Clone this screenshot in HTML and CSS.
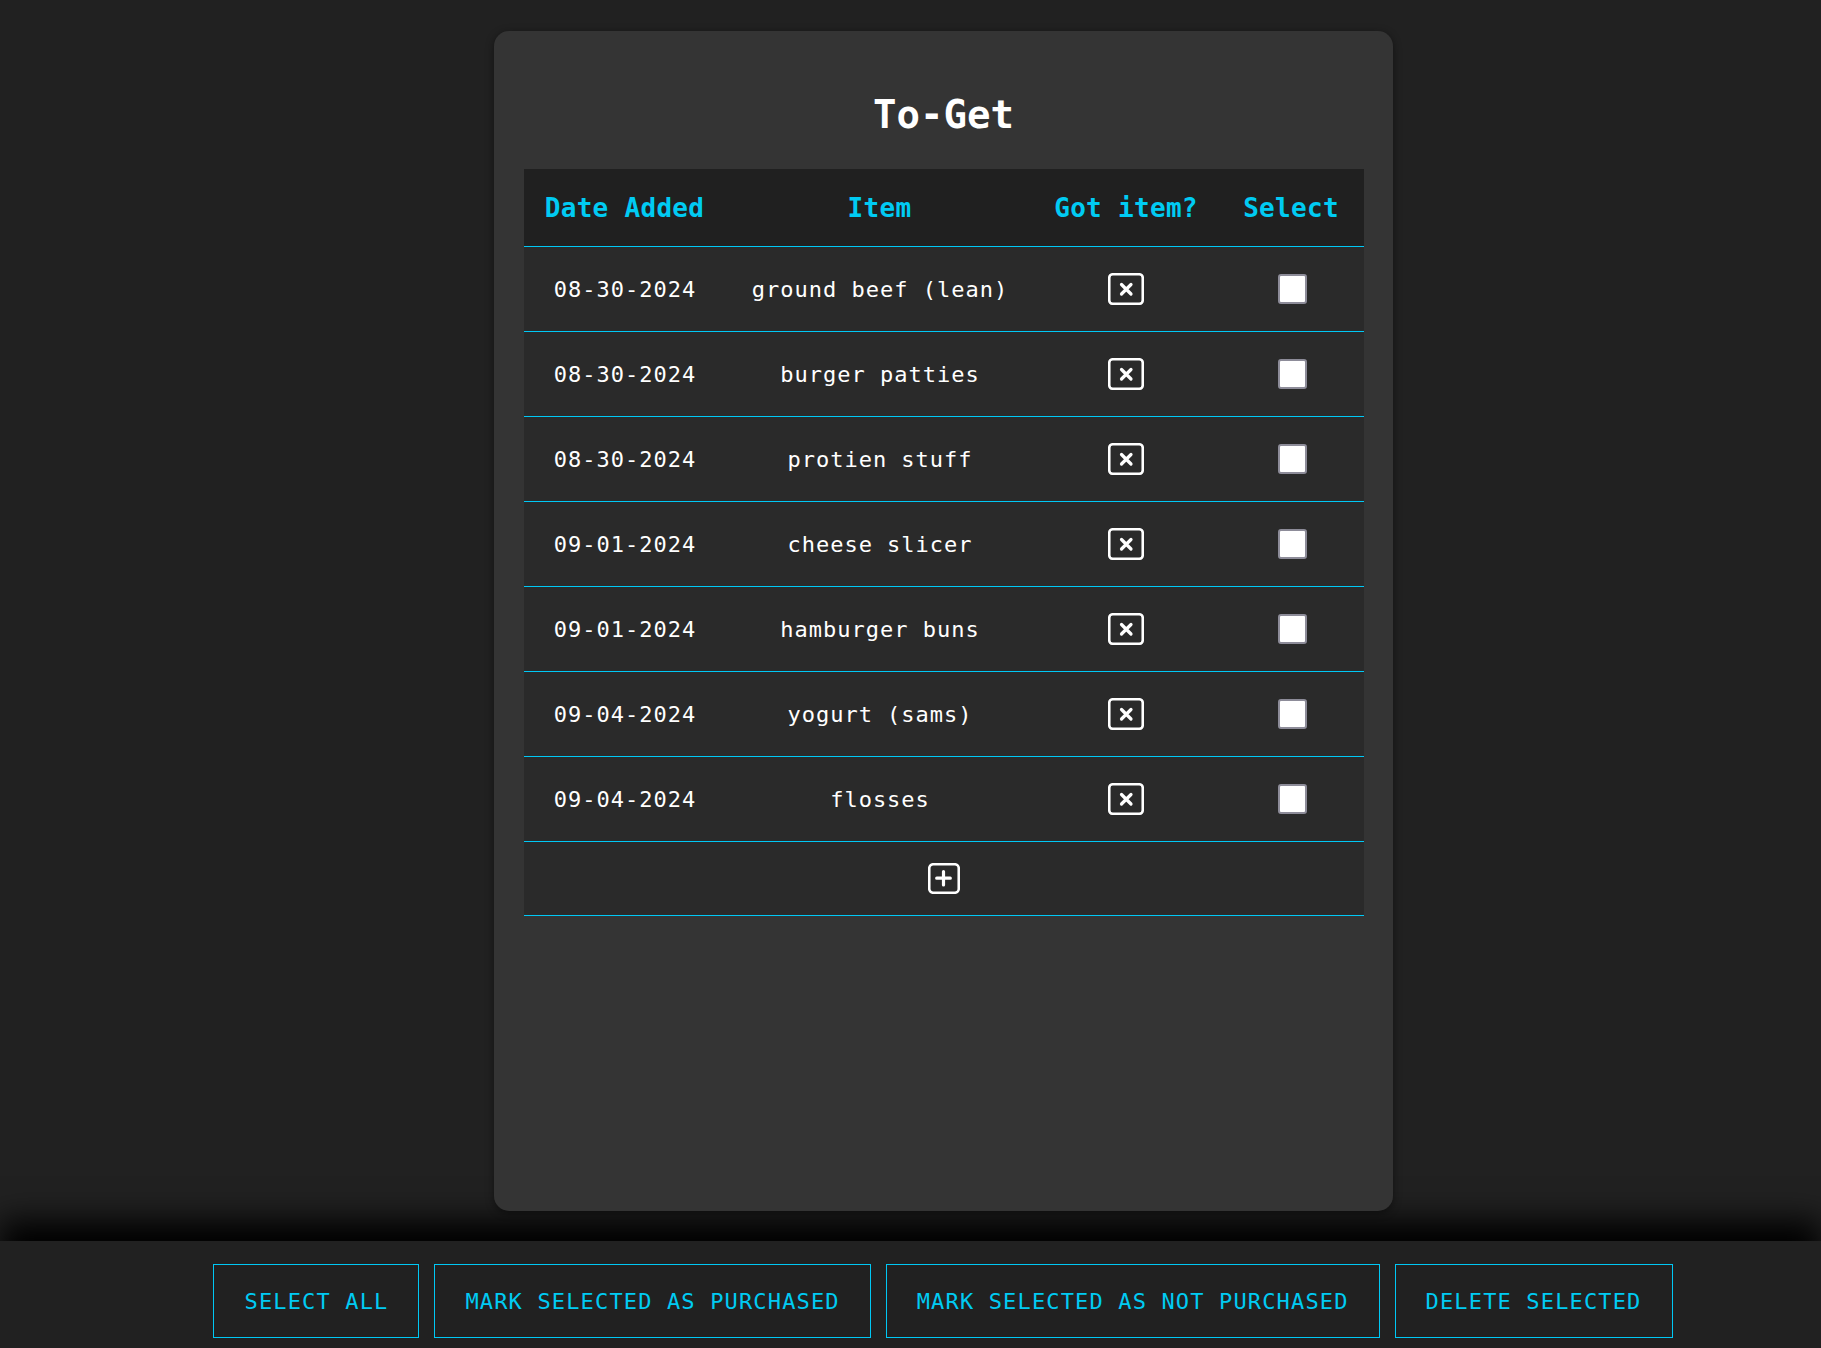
FILE: index.html
```html
<!DOCTYPE html>
<html lang="en">
<head>
<meta charset="utf-8">
<title>To-Get</title>
<link rel="stylesheet" href="styles.css">
</head>
<body>
<main class="page">
  <section class="card">
    <h1 class="title">To-Get</h1>
    <div class="list">
      <div class="row head">
        <div class="cell">Date Added</div>
        <div class="cell">Item</div>
        <div class="cell">Got item?</div>
        <div class="cell">Select</div>
      </div>

      <div class="row item">
        <div class="cell">08-30-2024</div>
        <div class="cell">ground beef (lean)</div>
        <div class="cell"><svg class="xbox" viewBox="0 0 36 32" width="36" height="32"><rect x="1.25" y="1.25" width="33.5" height="29.5" rx="3.5"/><path d="M13.5 11.5 L23 21 M23 11.5 L13.5 21"/></svg></div>
        <div class="cell"><input class="check" type="checkbox"></div>
      </div>
      <div class="row item">
        <div class="cell">08-30-2024</div>
        <div class="cell">burger patties</div>
        <div class="cell"><svg class="xbox" viewBox="0 0 36 32" width="36" height="32"><rect x="1.25" y="1.25" width="33.5" height="29.5" rx="3.5"/><path d="M13.5 11.5 L23 21 M23 11.5 L13.5 21"/></svg></div>
        <div class="cell"><input class="check" type="checkbox"></div>
      </div>
      <div class="row item">
        <div class="cell">08-30-2024</div>
        <div class="cell">protien stuff</div>
        <div class="cell"><svg class="xbox" viewBox="0 0 36 32" width="36" height="32"><rect x="1.25" y="1.25" width="33.5" height="29.5" rx="3.5"/><path d="M13.5 11.5 L23 21 M23 11.5 L13.5 21"/></svg></div>
        <div class="cell"><input class="check" type="checkbox"></div>
      </div>
      <div class="row item">
        <div class="cell">09-01-2024</div>
        <div class="cell">cheese slicer</div>
        <div class="cell"><svg class="xbox" viewBox="0 0 36 32" width="36" height="32"><rect x="1.25" y="1.25" width="33.5" height="29.5" rx="3.5"/><path d="M13.5 11.5 L23 21 M23 11.5 L13.5 21"/></svg></div>
        <div class="cell"><input class="check" type="checkbox"></div>
      </div>
      <div class="row item">
        <div class="cell">09-01-2024</div>
        <div class="cell">hamburger buns</div>
        <div class="cell"><svg class="xbox" viewBox="0 0 36 32" width="36" height="32"><rect x="1.25" y="1.25" width="33.5" height="29.5" rx="3.5"/><path d="M13.5 11.5 L23 21 M23 11.5 L13.5 21"/></svg></div>
        <div class="cell"><input class="check" type="checkbox"></div>
      </div>
      <div class="row item">
        <div class="cell">09-04-2024</div>
        <div class="cell">yogurt (sams)</div>
        <div class="cell"><svg class="xbox" viewBox="0 0 36 32" width="36" height="32"><rect x="1.25" y="1.25" width="33.5" height="29.5" rx="3.5"/><path d="M13.5 11.5 L23 21 M23 11.5 L13.5 21"/></svg></div>
        <div class="cell"><input class="check" type="checkbox"></div>
      </div>
      <div class="row item">
        <div class="cell">09-04-2024</div>
        <div class="cell">flosses</div>
        <div class="cell"><svg class="xbox" viewBox="0 0 36 32" width="36" height="32"><rect x="1.25" y="1.25" width="33.5" height="29.5" rx="3.5"/><path d="M13.5 11.5 L23 21 M23 11.5 L13.5 21"/></svg></div>
        <div class="cell"><input class="check" type="checkbox"></div>
      </div>

      <div class="add-row">
        <svg class="plus" viewBox="0 0 32 31" width="32" height="31"><rect x="1.25" y="1.25" width="29.5" height="28.5" rx="4"/><path d="M15.5 8.5 V22 M8.7 15.2 H22.3"/></svg>
      </div>
    </div>
  </section>
</main>
<footer class="actions">
  <button class="action">SELECT ALL</button>
  <button class="action">MARK SELECTED AS PURCHASED</button>
  <button class="action">MARK SELECTED AS NOT PURCHASED</button>
  <button class="action">DELETE SELECTED</button>
</footer>
</body>
</html>
```

FILE: styles.css
```css
html, body {
  margin: 0;
  padding: 0;
  background: #212121;
}

body {
  font-family: "DejaVu Sans Mono", "Liberation Mono", monospace;
  color: #ffffff;
  overflow: hidden;
}

.page {
  padding: 31px 0 30px 65px;
}

.card {
  position: relative;
  z-index: 1;
  box-sizing: border-box;
  width: 899px;
  height: 1180px;
  margin: 0 auto;
  padding: 0 29px 0 30px;
  background: #343434;
  border-radius: 15px;
  box-shadow: 0 2px 8px rgba(0, 0, 0, 0.45);
}

.title {
  box-sizing: border-box;
  height: 138px;
  margin: 0;
  padding-top: 28px;
  display: flex;
  align-items: center;
  justify-content: center;
  font-size: 39px;
  font-weight: bold;
  color: #ffffff;
}

.list {
  width: 840px;
}

.row {
  display: grid;
  grid-template-columns: 202px 308px 185px 145px;
  box-sizing: border-box;
  border-bottom: 1px solid #00c8f5;
}

.cell {
  display: flex;
  align-items: center;
  justify-content: center;
  white-space: nowrap;
}

.head {
  height: 78px;
  background: #202020;
  color: #00cbf3;
  font-size: 26px;
  font-weight: bold;
  letter-spacing: 0.3px;
}

.item {
  height: 85px;
  background: #2a2a2a;
  font-size: 22px;
  letter-spacing: 1px;
}

.item .cell:nth-child(1),
.item .cell:nth-child(2) {
  padding-left: 1px;
}

.xbox,
.plus {
  display: block;
  fill: none;
  stroke: #ffffff;
}

.xbox rect,
.plus rect {
  stroke-width: 2.6;
}

.xbox path,
.plus path {
  stroke-width: 3.2;
  stroke-linecap: round;
}

.check {
  appearance: none;
  -webkit-appearance: none;
  box-sizing: border-box;
  width: 29px;
  height: 30px;
  margin: 0 0 0 2px;
  background: #ffffff;
  border: 2px solid #8d8c99;
  border-radius: 3px;
}

.add-row {
  box-sizing: border-box;
  height: 74px;
  display: flex;
  align-items: center;
  justify-content: center;
  background: #2a2a2a;
  border-bottom: 1px solid #00c8f5;
}

.actions {
  display: flex;
  justify-content: center;
  gap: 15px;
  padding: 23px 0 23px 65px;
  background: #212121;
  box-shadow: 0 -20px 30px #000000;
}

.action {
  box-sizing: border-box;
  height: 74px;
  padding: 0 30px 0 30px;
  background: transparent;
  border: 1px solid #00c8f5;
  border-radius: 0;
  color: #00cbf3;
  font-family: "DejaVu Sans Mono", "Liberation Mono", monospace;
  font-size: 22px;
  letter-spacing: 1.15px;
}
```
